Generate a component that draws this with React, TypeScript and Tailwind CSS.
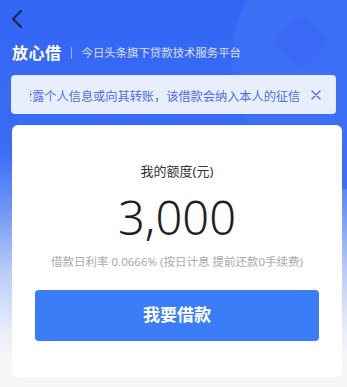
import React from "react";

export default function App() {
  return (
    <div
      className="relative w-[347px] h-[387px] overflow-hidden bg-[linear-gradient(180deg,#3366f5_0px,#3a6cf5_150px,#7096f7_210px,#b8cbf8_270px,#e8edf9_330px,#f6f6f8_360px,#f6f6f8_387px)]"
      style={{ fontFamily: '"Noto Sans", "Noto Sans CJK SC", sans-serif' }}
    >
      {/* decorations */}
      <div className="absolute left-[232px] top-[-70px] w-[260px] h-[260px] rounded-full bg-[#3d6ff6]" />
      <div className="absolute left-[281px] top-[22px] w-[40px] h-[40px] rotate-45 rounded-[8px] bg-[#3a6af5]" />

      <div className="relative flex flex-col">
        <div className="h-[38px] pl-[11px] pt-[10px]">
          <svg width="12" height="18" viewBox="0 0 12 18" fill="none">
            <path d="M10 1 L2 9 L10 17" stroke="#1c2640" strokeWidth="2" strokeLinecap="round" strokeLinejoin="round" />
          </svg>
        </div>
        <div className="flex items-center h-[30px] pl-[12px]">
          <span className="text-[16px] font-bold text-white leading-none tracking-[0.5px]">放心借</span>
          <span className="ml-[9px] w-px h-[12px] bg-white/50" />
          <span className="ml-[10px] text-[11.4px] text-white/80 leading-none">今日头条旗下贷款技术服务平台</span>
        </div>
        <div className="mx-[11px] mt-[7px] h-[39px] rounded-[4px] bg-[#e9eefc] flex items-center pl-[19px] pr-[15px]">
          <div className="flex-1 overflow-hidden whitespace-nowrap">
            <span className="inline-block ml-[-10px] text-[12.2px] text-[#4a72e6] leading-none">泄露个人信息或向其转账，该借款会纳入本人的征信</span>
          </div>
          <svg width="10" height="10" viewBox="0 0 10 10" className="ml-[6px] shrink-0">
            <path d="M1 1 L9 9 M9 1 L1 9" stroke="#4a72e6" strokeWidth="1.4" strokeLinecap="round" />
          </svg>
        </div>
        <div className="mx-[12px] mt-[11px] w-[330px] h-[252px] rounded-[6px] bg-white flex flex-col items-center">
          <div className="mt-[40px] text-[13px] text-[#333] leading-none">我的额度(元)</div>
          <div className="mt-[16px] text-[47px] font-light text-[#1f1f1f] leading-none">3,000</div>
          <div className="mt-[15px] text-[11.5px] text-[#aaa] leading-none">借款日利率 0.0666% (按日计息 提前还款0手续费)</div>
          <button className="mt-[22px] w-[284px] h-[51px] rounded-[4px] bg-[#3b7cf7] text-white text-[17px] font-bold">我要借款</button>
        </div>
      </div>
    </div>
  );
}
